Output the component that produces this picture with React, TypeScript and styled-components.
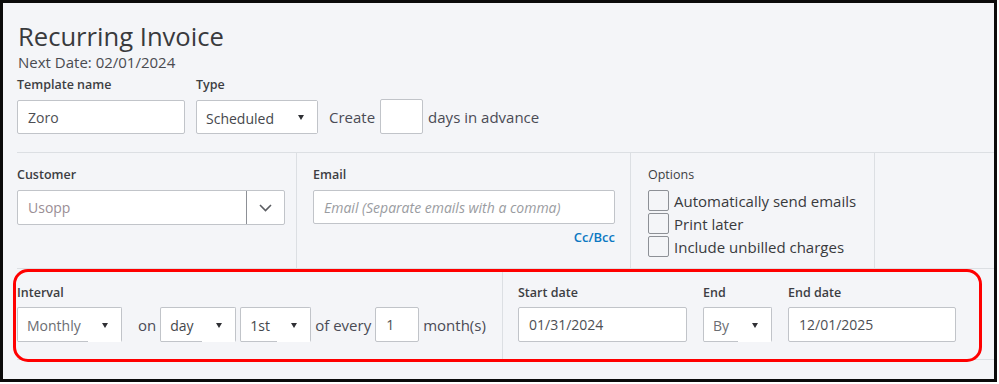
import React from "react";
import styled, { createGlobalStyle } from "styled-components";

const Global = createGlobalStyle`
  html, body { margin: 0; padding: 0; background: #ffffff; }
  body { font-family: "Open Sans", "Liberation Sans", sans-serif; color: #393a3d; }
  * { box-sizing: border-box; }
`;

const Frame = styled.div`
  position: relative;
  width: 997px;
  height: 382px;
  border: 3px solid #0b0b0b;
  background: #f4f5f8;
  overflow: hidden;
`;

const Header = styled.div`
  height: 149px;
  padding: 18px 0 0 14px;
`;

const Title = styled.h1`
  margin: 0;
  padding-left: 1px;
  font-size: 25.6px;
  line-height: 32px;
  font-weight: 400;
  color: #393a3d;
`;

const NextDate = styled.div`
  margin-top: 2px;
  padding-left: 1px;
  font-size: 15px;
  line-height: 15px;
  color: #4a4b50;
`;

const HeaderFields = styled.div`
  display: flex;
  align-items: flex-end;
  gap: 11px;
  margin-top: 7px;
`;

const Field = styled.div<{ $w?: number; $gap?: number }>`
  display: flex;
  flex-direction: column;
  gap: ${(p) => p.$gap ?? 7}px;
  width: ${(p) => (p.$w ? `${p.$w}px` : "auto")};
`;

const Label = styled.div<{ $weight?: number }>`
  font-size: 12.5px;
  line-height: 16px;
  font-weight: ${(p) => p.$weight ?? 600};
  color: #3d3e43;
  white-space: nowrap;
`;

const TextInput = styled.div<{ $h?: number; $muted?: boolean; $italic?: boolean }>`
  height: ${(p) => p.$h ?? 34}px;
  background: #ffffff;
  border: 1px solid #c1c4c9;
  border-radius: 2px;
  padding: 0 10px;
  display: flex;
  align-items: center;
  font-size: 14px;
  color: ${(p) => (p.$muted ? "#9a9ca1" : "#4d4f54")};
  font-style: ${(p) => (p.$italic ? "italic" : "normal")};
  white-space: nowrap;
`;

const SelectBox = styled.div<{ $w: number; $h?: number; $cut?: boolean }>`
  display: flex;
  width: ${(p) => p.$w}px;
  height: ${(p) => p.$h ?? 34}px;
  background: #ffffff;
  border: 1px solid #c1c4c9;
  border-bottom: ${(p) => (p.$cut ? "none" : "1px solid #c1c4c9")};
  border-radius: 2px;
`;

const SelectText = styled.div<{ $cut?: boolean; $muted?: boolean }>`
  flex: 1;
  display: flex;
  align-items: center;
  padding: 2px 0 0 9px;
  font-size: 14px;
  color: ${(p) => (p.$muted ? "#6b6d72" : "#45474c")};
  border-bottom: ${(p) => (p.$cut ? "1px solid #c1c4c9" : "none")};
  white-space: nowrap;
`;

const ArrowZone = styled.div`
  width: 33px;
  display: flex;
  align-items: center;
  justify-content: center;
  background: #ffffff;
`;

const Triangle = styled.span`
  width: 0;
  height: 0;
  border-left: 3.5px solid transparent;
  border-right: 3.5px solid transparent;
  border-top: 5px solid #2f3034;
`;

const Inline = styled.span<{ $size?: number }>`
  font-size: ${(p) => p.$size ?? 15}px;
  color: #4a4b55;
  white-space: nowrap;
  line-height: 20px;
`;

const Grid = styled.div<{ $cols: string; $h: number }>`
  margin-left: 14px;
  display: grid;
  grid-template-columns: ${(p) => p.$cols};
  height: ${(p) => p.$h}px;
  border-bottom: 1px solid #dcdfe3;
`;

const TopGrid = styled(Grid)`
  border-top: 1px solid #dcdfe3;
`;

const Cell = styled.div<{ $pl?: number; $pt?: number; $divider?: boolean }>`
  padding-left: ${(p) => p.$pl ?? 0}px;
  padding-top: ${(p) => p.$pt ?? 14}px;
  border-right: ${(p) => (p.$divider ? "1px solid #dcdfe3" : "none")};
  display: flex;
  flex-direction: column;
`;

const ComboBox = styled.div`
  display: flex;
  width: 268px;
  height: 35px;
  background: #ffffff;
  border: 1px solid #c1c4c9;
  border-radius: 2px;
`;

const ComboText = styled.div`
  flex: 1;
  display: flex;
  align-items: center;
  padding-left: 10px;
  font-size: 14px;
  color: #9a8e95;
  border-right: 1px solid #8d9096;
`;

const ComboArrow = styled.div`
  width: 37px;
  display: flex;
  align-items: center;
  justify-content: center;
`;

const LinkRow = styled.div`
  display: flex;
  justify-content: flex-end;
  width: 302px;
  margin-top: 5px;
`;

const Link = styled.span`
  font-size: 13px;
  line-height: 16px;
  font-weight: 600;
  color: #0b78c2;
`;

const CheckList = styled.div`
  display: flex;
  flex-direction: column;
  gap: 2px;
  margin-top: 7px;
`;

const CheckRow = styled.label`
  display: flex;
  align-items: center;
  gap: 5px;
`;

const Box = styled.span`
  width: 21px;
  height: 21px;
  border: 1px solid #8d9096;
  border-radius: 2px;
  background: #f4f5f8;
`;

const CheckText = styled.span`
  font-size: 15px;
  line-height: 20px;
  color: #393a3d;
`;

const FlowRow = styled.div<{ $gap?: number }>`
  display: flex;
  align-items: center;
  gap: ${(p) => p.$gap ?? 4}px;
`;

const BottomFields = styled.div`
  display: flex;
  gap: 16px;
`;

const Highlight = styled.div`
  position: absolute;
  left: 10px;
  top: 266px;
  width: 969px;
  height: 93px;
  border: 3px solid #ff0000;
  border-radius: 15px;
  pointer-events: none;
`;

const Spacer = styled.span<{ $w: number }>`
  display: inline-block;
  width: ${(p) => p.$w}px;
`;

function Select({ w, text, cut, muted, h }: { w: number; text: string; cut?: boolean; muted?: boolean; h?: number }) {
  return (
    <SelectBox $w={w} $h={h} $cut={cut}>
      <SelectText $cut={cut} $muted={muted}>{text}</SelectText>
      <ArrowZone>
        <Triangle />
      </ArrowZone>
    </SelectBox>
  );
}

export default function App() {
  return (
    <>
      <Global />
      <Frame>
        <Header>
          <Title>Recurring Invoice</Title>
          <NextDate>Next Date: 02/01/2024</NextDate>
          <HeaderFields>
            <Field $w={168}>
              <Label>Template name</Label>
              <TextInput>Zoro</TextInput>
            </Field>
            <Field>
              <Label>Type</Label>
              <Select w={122} text="Scheduled" />
            </Field>
            <FlowRow $gap={5}>
              <Inline>Create</Inline>
              <TextInput $h={35} style={{ width: 43 }} />
              <Inline>days in advance</Inline>
            </FlowRow>
          </HeaderFields>
        </Header>

        <TopGrid $cols="280px 334px 244px 1fr" $h={117}>
          <Cell $divider>
            <Field>
              <Label>Customer</Label>
              <ComboBox>
                <ComboText>Usopp</ComboText>
                <ComboArrow>
                  <svg width="13" height="8" viewBox="0 0 13 8" fill="none">
                    <polyline points="1,1 6.5,6.5 12,1" stroke="#5b5d62" strokeWidth="1.6" />
                  </svg>
                </ComboArrow>
              </ComboBox>
            </Field>
          </Cell>
          <Cell $divider $pl={16}>
            <Field $w={302}>
              <Label>Email</Label>
              <TextInput $muted $italic>Email (Separate emails with a comma)</TextInput>
            </Field>
            <LinkRow>
              <Link>Cc/Bcc</Link>
            </LinkRow>
          </Cell>
          <Cell $divider $pl={17}>
            <Label $weight={400}>Options</Label>
            <CheckList>
              <CheckRow>
                <Box />
                <CheckText>Automatically send emails</CheckText>
              </CheckRow>
              <CheckRow>
                <Box />
                <CheckText>Print later</CheckText>
              </CheckRow>
              <CheckRow>
                <Box />
                <CheckText>Include unbilled charges</CheckText>
              </CheckRow>
            </CheckList>
          </Cell>
          <Cell />
        </TopGrid>

        <Grid $cols="486px 1fr" $h={91}>
          <Cell $divider $pt={16}>
            <Field $gap={6}>
              <Label>Interval</Label>
              <FlowRow>
                <Select w={105} h={35} text="Monthly" cut muted />
                <Spacer $w={8} />
                <Inline>on</Inline>
                <Select w={76} h={35} text="day" cut />
                <Select w={71} h={35} text="1st" cut />
                <Inline>of every</Inline>
                <TextInput $h={35} style={{ width: 44 }}>1</TextInput>
                <Inline>month(s)</Inline>
              </FlowRow>
            </Field>
          </Cell>
          <Cell $pl={15} $pt={16}>
            <BottomFields>
              <Field $gap={6} $w={169}>
                <Label>Start date</Label>
                <TextInput $h={35}>01/31/2024</TextInput>
              </Field>
              <Field $gap={6}>
                <Label>End</Label>
                <Select w={69} h={35} text="By" cut muted />
              </Field>
              <Field $gap={6} $w={168}>
                <Label>End date</Label>
                <TextInput $h={35}>12/01/2025</TextInput>
              </Field>
            </BottomFields>
          </Cell>
        </Grid>

        <Highlight />
      </Frame>
    </>
  );
}
